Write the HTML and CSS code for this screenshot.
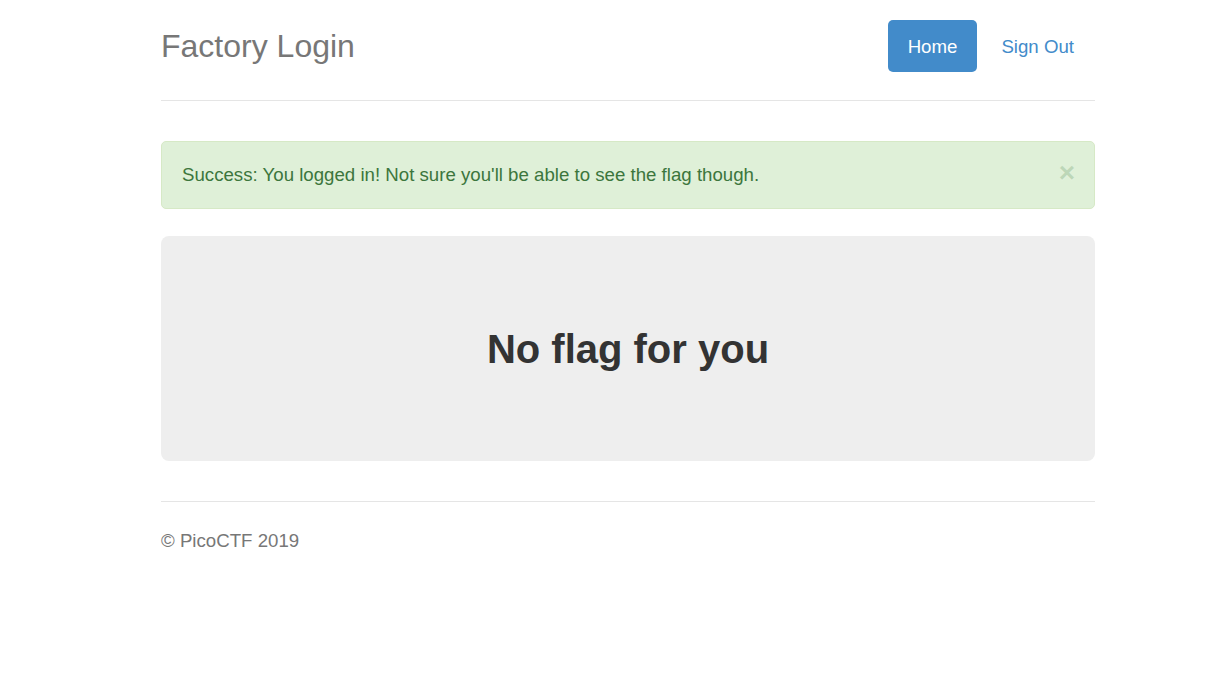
FILE: index.html
```html
<!DOCTYPE html>
<html lang="en">
<head>
<meta charset="utf-8">
<title>Factory Login</title>
<link rel="stylesheet" href="styles.css">
</head>
<body>
<div class="container">
  <div class="header">
    <h3 class="brand">Factory Login</h3>
    <nav class="nav">
      <a class="pill active" href="#">Home</a>
      <a class="pill" href="#">Sign Out</a>
    </nav>
  </div>
  <div class="alert">
    <span class="alert-text">Success: You logged in! Not sure you'll be able to see the flag though.</span>
    <button class="close" type="button">&times;</button>
  </div>
  <div class="jumbotron">
    <h2 class="jumbo-title">No flag for you</h2>
  </div>
  <footer class="footer">
    <p class="footer-text">&copy; PicoCTF 2019</p>
  </footer>
</div>
</body>
</html>
```
FILE: styles.css
```css
html, body {
  margin: 0;
  padding: 0;
  background: #fff;
}
body {
  font-family: "Liberation Sans", Arial, Helvetica, sans-serif;
  font-size: 18.67px;
  line-height: 1.42857;
  color: #333;
  padding-top: 20px;
}
.container {
  width: 934px;
  margin-left: 161px;
}
.header {
  display: flex;
  align-items: center;
  justify-content: space-between;
  height: 52px;
  padding-bottom: 28px;
  border-bottom: 1px solid #e5e5e5;
  margin-bottom: 40px;
}
.brand {
  margin: 0;
  font-size: 32px;
  font-weight: 400;
  line-height: 52px;
  color: #777;
}
.nav {
  display: flex;
  gap: 4px;
  margin-right: 1px;
}
.pill {
  display: block;
  padding: 14px 20px 12px;
  line-height: 26px;
  font-size: 18.67px;
  color: #428bca;
  text-decoration: none;
  border-radius: 5px;
}
.pill.active {
  background: #428bca;
  color: #fff;
}
.alert {
  display: flex;
  align-items: center;
  justify-content: space-between;
  padding: 20px 21px 20px 20px;
  line-height: 26px;
  background: #dff0d8;
  border: 1px solid #d6e9c6;
  color: #3c763d;
  border-radius: 5px;
  margin-bottom: 27px;
}
.close {
  background: none;
  border: 0;
  padding: 0;
  margin-top: -4px;
  margin-right: -2px;
  font-family: "Liberation Sans", Arial, sans-serif;
  font-size: 28px;
  font-weight: 700;
  line-height: 1;
  color: #3c763d;
  opacity: 0.2;
  text-shadow: 0 1px 0 #fff;
  cursor: pointer;
}
.jumbotron {
  display: flex;
  align-items: center;
  justify-content: center;
  height: 225px;
  background: #eee;
  border-radius: 8px;
  margin-bottom: 40px;
}
.jumbo-title {
  margin: 0;
  font-size: 40px;
  font-weight: 700;
  line-height: 44px;
  color: #333;
}
.footer {
  border-top: 1px solid #e5e5e5;
  padding-top: 26px;
}
.footer-text {
  margin: 0;
  color: #777;
  line-height: 26px;
}
```
